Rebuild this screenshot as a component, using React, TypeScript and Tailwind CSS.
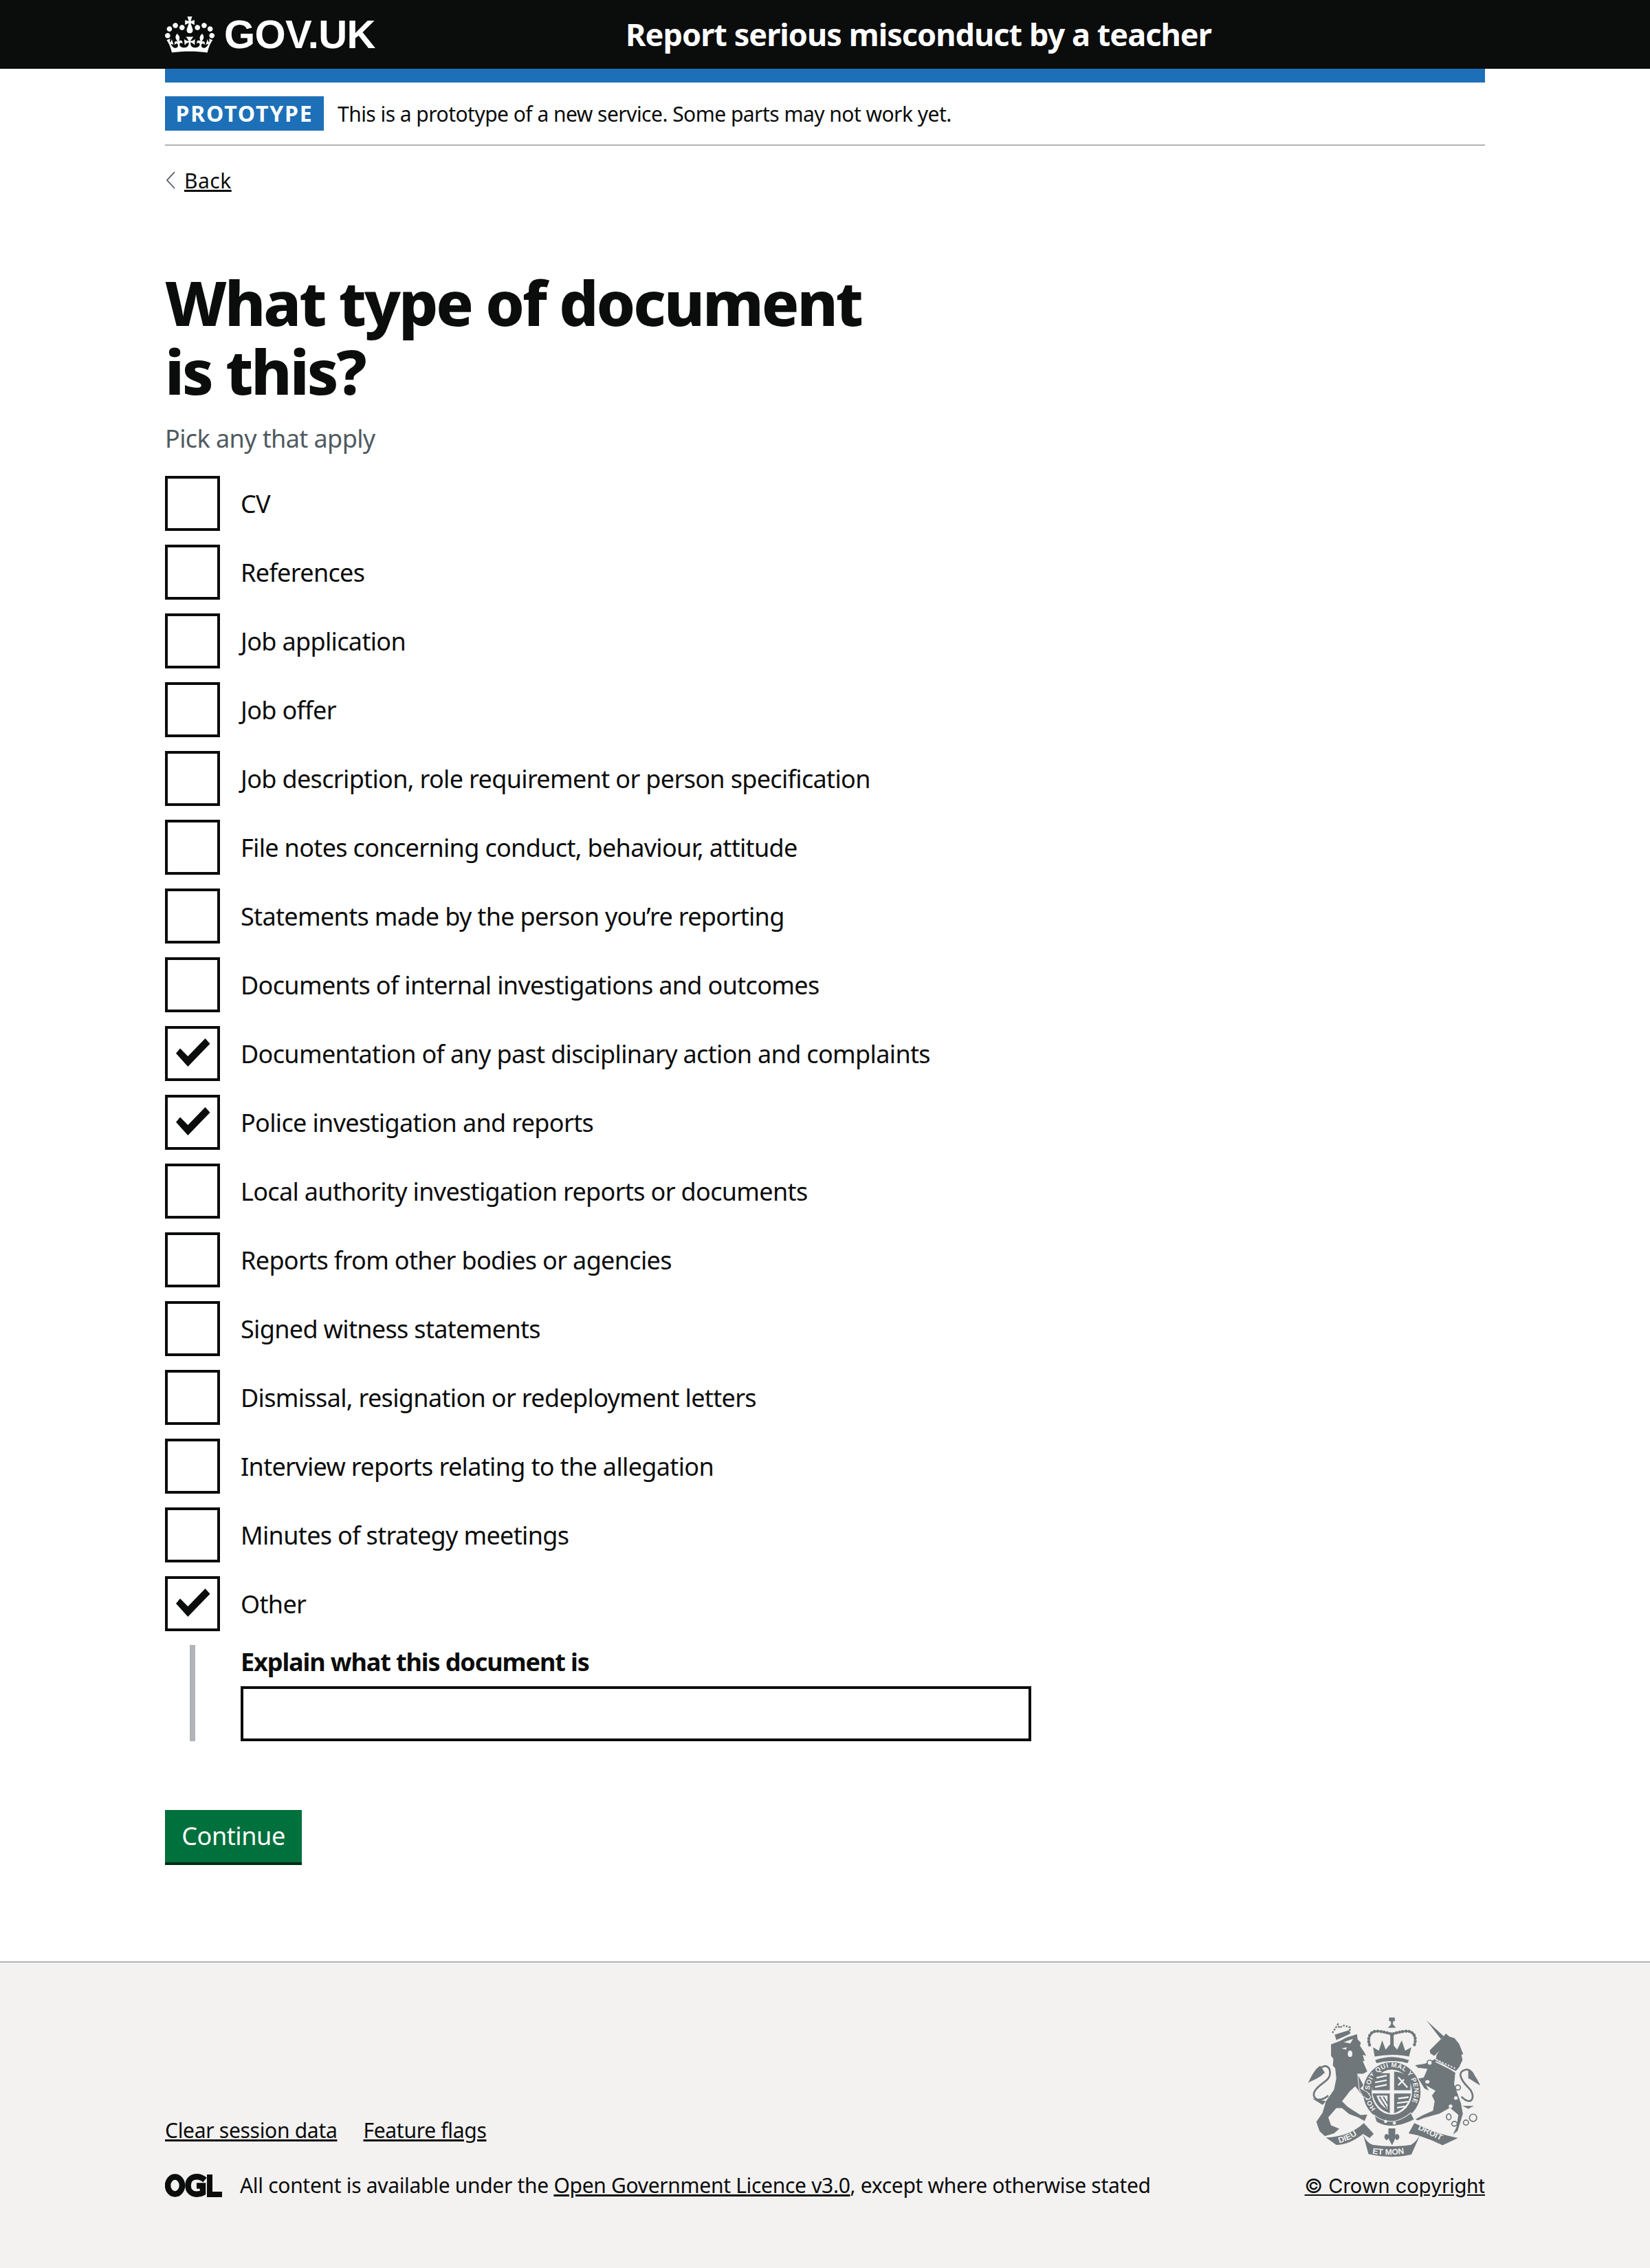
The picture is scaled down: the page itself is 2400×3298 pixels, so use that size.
const items = [
  { label: "CV" },
  { label: "References" },
  { label: "Job application" },
  { label: "Job offer" },
  { label: "Job description, role requirement or person specification" },
  { label: "File notes concerning conduct, behaviour, attitude" },
  { label: "Statements made by the person you’re reporting" },
  { label: "Documents of internal investigations and outcomes" },
  { label: "Documentation of any past disciplinary action and complaints", checked: true },
  { label: "Police investigation and reports", checked: true },
  { label: "Local authority investigation reports or documents" },
  { label: "Reports from other bodies or agencies" },
  { label: "Signed witness statements" },
  { label: "Dismissal, resignation or redeployment letters" },
  { label: "Interview reports relating to the allegation" },
  { label: "Minutes of strategy meetings" },
  { label: "Other", checked: true },
];

const CrownIcon = () => (
  <svg viewBox="0 0 132 97" className="w-[72px] h-[53px] shrink-0" fill="#ffffff">
    <path d="M25 30.2c3.5 1.5 7.7-.2 9.1-3.7 1.5-3.6-.2-7.8-3.9-9.2-3.6-1.4-7.6.3-9.1 3.9-1.4 3.5.3 7.5 3.9 9zM9 39.5c3.6 1.5 7.8-.2 9.2-3.7 1.5-3.6-.2-7.8-3.9-9.1-3.6-1.5-7.6.2-9.1 3.8-1.4 3.5.3 7.5 3.8 9zM4.4 57.2c3.5 1.5 7.7-.2 9.1-3.8 1.5-3.6-.2-7.7-3.9-9.1-3.5-1.5-7.6.3-9.1 3.8-1.4 3.5.3 7.6 3.9 9.1zm38.3-21.4c3.5 1.5 7.7-.2 9.1-3.8 1.5-3.6-.2-7.7-3.9-9.1-3.6-1.5-7.6.3-9.1 3.8-1.3 3.6.4 7.7 3.9 9.1zm64.4-5.6c-3.6 1.5-7.8-.2-9.1-3.7-1.5-3.6.2-7.8 3.8-9.2 3.6-1.4 7.7.3 9.2 3.9 1.3 3.5-.4 7.5-3.9 9zm15.9 9.3c-3.6 1.5-7.7-.2-9.1-3.7-1.5-3.6.2-7.8 3.8-9.1 3.6-1.5 7.7.2 9.2 3.8 1.5 3.5-.3 7.5-3.9 9zm4.7 17.7c-3.6 1.5-7.8-.2-9.2-3.8-1.5-3.6.2-7.7 3.9-9.1 3.6-1.5 7.7.3 9.2 3.8 1.3 3.5-.4 7.6-3.9 9.1zM89.3 35.8c-3.6 1.5-7.8-.2-9.2-3.8-1.4-3.6.2-7.7 3.9-9.1 3.6-1.5 7.7.3 9.2 3.8 1.4 3.6-.3 7.7-3.9 9.1zM69.7 17.7l8.9 4.7V9.3l-8.9 2.8c-.2-.3-.5-.6-.9-.9L72.4 0H59.6l3.6 11.2c-.3.3-.6.5-.9.9l-8.8-2.8v13.1l8.8-4.7c.3.3.6.7.9.9l-5 15.4v.1c-.2.8-.4 1.6-.4 2.4 0 4.1 3.1 7.5 7 8.1h.2c.3 0 .7.1 1 .1.4 0 .7 0 1-.1h.2c4-.6 7.1-4.1 7.1-8.1 0-.8-.1-1.7-.4-2.4V34l-5.1-15.4c.4-.2.7-.6 1-.9zM66 92.8c16.9 0 32.8 1.1 47.1 3.2 4-16.9 8.9-26.7 14-33.5l-9.6-3.4c1 4.9 1.1 7.2 0 10.2-1.5-1.4-3-4.3-4.2-8.7L108.6 76c2.8-2 5-3.2 7.5-3.3-4.4 9.4-10 11.9-13.6 11.2-4.3-.8-6.3-4.6-5.6-7.9 1-4.7 5.7-5.9 8-.5 4.3-8.7-3-11.4-7.6-8.8 7.1-7.2 7.9-13.5 2.1-21.1-8 6.1-8.1 12.3-4.5 20.8-4.7-5.4-12.1-2.5-9.5 6.2 3.4-5.2 7.9-2 7.2 3.1-.6 4.3-6.4 7.8-13.5 7.2-10.3-.9-10.9-8-11.2-13.8 2.5-.5 7.1 1.8 11 7.3L80.2 60c-4.1 4.4-8 5.3-12.3 5.4 1.4-4.4 8-11.6 8-11.6H55.5s6.4 7.2 7.9 11.6c-4.2-.1-8-1-12.3-5.4l1.4 16.4c3.9-5.5 8.5-7.7 11-7.3-.3 5.8-.9 12.8-11.1 13.8-7.2.6-12.9-2.9-13.5-7.2-.7-5 3.8-8.3 7.1-3.1 2.7-8.7-4.6-11.6-9.4-6.2 3.7-8.5 3.6-14.7-4.6-20.8-5.8 7.6-5 13.9 2.2 21.1-4.7-2.6-11.9.1-7.7 8.8 2.3-5.5 7.1-4.2 8.1.5.7 3.3-1.3 7.1-5.7 7.9-3.5.7-9-1.8-13.5-11.2 2.5.1 4.7 1.3 7.5 3.3l-4.7-15.4c-1.2 4.4-2.7 7.2-4.3 8.7-1.1-3-.9-5.3 0-10.2l-9.5 3.4c5 6.9 9.9 16.7 14 33.5 14.8-2.1 30.8-3.2 47.7-3.2z" />
  </svg>
);

const Checkbox = ({ checked }: { checked?: boolean }) => (
  <span className="w-[80px] h-[80px] border-4 border-[#0b0c0c] bg-white shrink-0 relative block">
    {checked && (
      <svg viewBox="0 0 80 80" className="absolute -left-[4px] -top-[4px] w-[80px] h-[80px]" fill="#0b0c0c">
        <polygon points="16,39.7 33.3,59 65.5,25.7 58.5,18 33.3,44 22,32.5" />
      </svg>
    )}
  </span>
);

const OglLogo = () => (
  <svg viewBox="0 0 83 34" className="w-[83px] h-[34px] shrink-0" fill="none" stroke="#0b0c0c" strokeWidth="8.5">
    <ellipse cx="14.500" cy="17" rx="10.500" ry="12.500" />
    <path d="M58 9 C54 5.500 50 4.300 46.500 4.300 C38 4.300 33.500 10 33.500 17 C33.500 24 38 29.700 46 29.700 C49.500 29.700 52.500 29 55 27.500 V17.500 H46" />
    <path d="M65 1 V30 H83" strokeWidth="8" />
  </svg>
);

// royal arms, traced by eye from the footer
const Crest = () => (
  <svg viewBox="160 100 755 620" className="w-[252px] h-[207px] block mr-[6px]" fill="#6f777b">
    <defs>
      <path id="garter" d="M457 503 A97 107 0 1 1 597 503" />
      <path id="rib-l" d="M298 652 Q350 640 400 598" />
      <path id="rib-m" d="M442 698 Q525 712 612 692" />
      <path id="rib-r" d="M640 592 Q700 620 768 655" />
    </defs>
    {/* lion */}
    <path d="M262 222 L300 208 L330 192 L375 178 L378 200 L392 215 L388 228 L410 262 L415 272 L400 268 L408 295 L400 295 L420 340 L402 350 L378 350 L405 400 L392 415 L420 430 L436 452 L425 462 L400 448 L368 405 L345 425 L310 470 L335 495 L390 530 L420 528 L408 556 L380 540 L340 525 L310 500 L285 500 L250 540 L262 575 L298 590 L275 610 L235 622 L212 600 L198 560 L225 520 L240 470 L275 420 L285 370 L280 325 L270 315 L272 285 L262 272 Z" />
    <path d="M250 445 C205 485 170 450 195 420 C220 385 270 380 255 330 C240 305 215 320 205 345" fill="none" stroke="#6f777b" strokeWidth="8" />
    <path d="M215 315 C190 330 175 365 162 390 C190 375 210 370 235 345 Z" />
    <path d="M180 458 L240 470 L225 486 Z" />
    <path d="M268 172 L292 135 L298 150 L318 140 L345 148 L342 178" fill="none" stroke="#6f777b" strokeWidth="7" strokeDasharray="8 5" />
    <path d="M278 180 L342 160 L342 178 L285 203 Z" />
    <path d="M318 212 L358 198 L346 218 Z M308 240 L330 235 L328 245 Z" fill="#f3f2f1" />
    <ellipse cx="345" cy="263" rx="10" ry="14" fill="#f3f2f1" />
    {/* crown */}
    <path d="M515 105 H540 V122 H532 V135 L545 150 H510 L523 135 V122 H515 Z" />
    <path d="M430 225 C418 190 435 160 470 165 C495 168 510 172 527 178 C545 172 560 168 585 165 C620 160 638 190 625 225" fill="none" stroke="#6f777b" strokeWidth="13" strokeDasharray="2 12" strokeLinecap="round" />
    <path d="M520 175 H535 V235 H520 Z" />
    <path d="M445 235 L470 250 L485 205 L500 245 L525 215 L550 245 L570 205 L585 250 L612 235 L602 275 Q527 260 452 275 Z" />
    {/* garter and shield */}
    <ellipse cx="527" cy="430" rx="127" ry="132" stroke="#f3f2f1" strokeWidth="4" />
    <ellipse cx="527" cy="430" rx="88" ry="98" fill="#f3f2f1" />
    <path d="M452 290 Q527 262 604 290 L596 306 Q527 286 460 306 Z" stroke="#f3f2f1" strokeWidth="3" />
    <text fontFamily="'Liberation Sans', sans-serif" fontWeight="700" fontSize="29" letterSpacing="1.5" fill="#f3f2f1">
      <textPath href="#garter">HONI SOIT QUI MAL Y PENSE</textPath>
    </text>
    <path d="M447 348 H518 V422 H442 Q441 380 447 348 Z M537 340 Q578 344 608 368 V422 H537 Z M442 436 H518 V522 Q458 505 442 436 Z M537 436 H610 Q600 500 537 522 Z" />
    <path d="M460 368 L505 358 M454 388 L505 378 M454 408 L505 398 M555 365 L595 410 M555 400 L580 375 M555 458 L600 452 M550 478 L600 472 M550 498 L585 492" stroke="#f3f2f1" strokeWidth="7" fill="none" />
    <path d="M460 445 H508 V505 Q475 490 460 445 Z" fill="#f3f2f1" />
    <path d="M473 450 L505 500 M490 450 L508 480" stroke="#6f777b" strokeWidth="6" fill="none" />
    <path d="M450 530 Q527 590 610 520 L625 550 Q527 600 460 560 Z" stroke="#f3f2f1" strokeWidth="3" />
    <circle cx="500" cy="558" r="7" fill="#f3f2f1" />
    <circle cx="538" cy="565" r="7" fill="#f3f2f1" />
    {/* forepaw over the garter */}
    <path d="M378 350 L405 400 L392 415 L420 430 L436 452 L425 462 L400 448 L385 420 Z" stroke="#f3f2f1" strokeWidth="3" />
    {/* unicorn */}
    <path d="M678 118 L755 188 L740 198 Z" />
    <path d="M692 248 L715 225 L755 185 L762 175 L778 188 L800 195 L820 220 L838 265 L830 268 L835 290 L820 322 L800 345 L715 310 L722 268 L735 250 L712 272 L695 262 Z" />
    <path d="M625 312 L670 305 L715 285 L805 345 L800 395 L830 480 L838 525 L815 600 L790 620 L808 580 L815 530 L780 500 L735 525 L665 545 L640 555 L628 548 L660 530 L705 510 L712 470 L700 445 L715 425 L680 405 L692 428 L668 415 L640 370 L665 365 L680 330 L640 325 Z" stroke="#f3f2f1" strokeWidth="3" />
    <path d="M718 298 L808 342" stroke="#f3f2f1" strokeWidth="5" fill="none" />
    <path d="M720 288 L805 328" stroke="#f3f2f1" strokeWidth="5" fill="none" strokeDasharray="8 6" />
    <path d="M830 450 C880 500 895 440 860 410 C825 375 810 340 850 332 C865 330 880 345 885 360" fill="none" stroke="#6f777b" strokeWidth="8" />
    <path d="M860 335 C885 345 900 375 912 400 C890 390 875 375 860 370 Z" />
    <path d="M835 490 L885 490 L860 503 Z" />
    <g fill="#f3f2f1" stroke="#6f777b" strokeWidth="5">
      <ellipse cx="692" cy="302" rx="11" ry="11" />
      <ellipse cx="682" cy="385" rx="12" ry="10" />
      <ellipse cx="815" cy="410" rx="11" ry="11" />
      <ellipse cx="775" cy="538" rx="10" ry="13" />
      <ellipse cx="800" cy="568" rx="12" ry="10" />
      <circle cx="850" cy="563" r="11" />
      <circle cx="881" cy="542" r="16" />
    </g>
    <circle cx="806" cy="456" r="8" fill="#f3f2f1" />
    <circle cx="783" cy="492" r="8" fill="#f3f2f1" />
    {/* fleur and ribbon */}
    <path d="M512 588 H542 V618 L548 612 C562 612 565 635 548 640 L542 632 L528 662 L512 632 L506 640 C490 635 492 612 506 612 L512 618 Z" />
    <path d="M240 628 Q340 625 405 565 L448 612 L430 630 L402 612 Q340 660 285 660 Z" />
    <path d="M402 615 Q420 655 445 660 Q525 672 610 660 Q635 645 650 615 L640 640 L612 702 Q525 722 425 700 Z" />
    <path d="M625 565 Q720 612 815 630 L748 662 Q695 635 640 618 L600 610 Z" />
    <text fontFamily="'Liberation Sans', sans-serif" fontWeight="700" fontSize="36" fill="#f3f2f1">
      <textPath href="#rib-l">DIEU</textPath>
    </text>
    <text fontFamily="'Liberation Sans', sans-serif" fontWeight="700" fontSize="36" fill="#f3f2f1">
      <textPath href="#rib-m">ET MON</textPath>
    </text>
    <text fontFamily="'Liberation Sans', sans-serif" fontWeight="700" fontSize="36" fill="#f3f2f1">
      <textPath href="#rib-r">DROIT</textPath>
    </text>
  </svg>
);

export default function App() {
  return (
    <div className="min-h-[3298px] flex flex-col bg-white text-[#0b0c0c] font-['Noto_Sans',sans-serif]">
      <header className="h-[100px] bg-[#0b0c0c] text-white">
        <div className="w-[1920px] mx-auto h-full flex items-center">
          <div className="w-[670px] flex items-center gap-[14px]">
            <CrownIcon />
            <span className="font-['Liberation_Sans',sans-serif] font-bold text-[58px] leading-none tracking-[-0.6px]">GOV.UK</span>
          </div>
          <span className="-mt-[2px] font-bold text-[45px] leading-none tracking-[-0.95px]">Report serious misconduct by a teacher</span>
        </div>
      </header>

      <main className="w-[1920px] mx-auto flex-1">
        <div className="h-[20px] bg-[#1d70b8]" />
        <div className="h-[92px] border-b-2 border-[#b1b4b6] flex items-start pt-[20px]">
          <span className="h-[50px] w-[231px] bg-[#1d70b8] text-white font-bold text-[32px] tracking-[1.8px] flex items-center justify-center">PROTOTYPE</span>
          <span className="ml-[20px] h-[50px] flex items-center text-[30px] tracking-[-0.53px]">This is a prototype of a new service. Some parts may not work yet.</span>
        </div>

        <div className="pt-[30px] flex items-center h-[70px]">
          <svg viewBox="0 0 16 26" className="w-[16px] h-[28px] mr-[12px]" fill="none" stroke="#505a5f" strokeWidth="1.800">
            <path d="M14 1 L3 13 L14 25" />
          </svg>
          <a className="text-[30px] underline tracking-[0.5px]">Back</a>
        </div>

        <h1 className="mt-[107px] w-[1100px] font-extrabold text-[90px] leading-[100px] tracking-[-3px]">What type of document<br />is this?</h1>
        <p className="mt-[24px] text-[36px] leading-[50px] text-[#505a5f] tracking-[-0.6px]">Pick any that apply</p>

        <div className="mt-[29px] flex flex-col gap-[20px]">
          {items.map((item) => (
            <label key={item.label} className="flex items-center">
              <Checkbox checked={item.checked} />
              <span className="ml-[30px] pt-[2px] text-[36px] tracking-[-0.66px]">{item.label}</span>
            </label>
          ))}
        </div>

        <div className="mt-[20px] ml-[36px] pl-[66px] border-l-8 border-[#b1b4b6] h-[140px]">
          <div className="font-bold text-[36px] leading-[50px] tracking-[-1.1px]">Explain what this document is</div>
          <input className="mt-[10px] block w-[1150px] h-[80px] border-4 border-[#0b0c0c] bg-white" />
        </div>

        <button className="mt-[100px] block w-[199px] h-[76px] bg-[#00703c] text-white text-[36px] tracking-[-0.4px] shadow-[0_4px_0_#002d18]">Continue</button>
      </main>

      <footer className="h-[446px] bg-[#f3f2f1] border-t-2 border-[#b1b4b6]">
        <div className="w-[1920px] mx-auto h-full flex justify-between items-start pt-[78px]">
          <div className="pt-[143px]">
            <div className="flex gap-[38px] text-[30px] tracking-[-0.3px]">
              <a className="underline">Clear session data</a>
              <a className="underline">Feature flags</a>
            </div>
            <div className="mt-[35px] flex items-center gap-[26px] text-[30px] tracking-[-0.31px]">
              <OglLogo />
              <span>All content is available under the <a className="underline">Open Government Licence v3.0</a>, except where otherwise stated</span>
            </div>
          </div>
          <div className="flex flex-col items-end">
            <Crest />
            <a className="mt-[18px] text-[29px] underline font-['Inter',sans-serif]">© Crown copyright</a>
          </div>
        </div>
      </footer>
    </div>
  );
}
